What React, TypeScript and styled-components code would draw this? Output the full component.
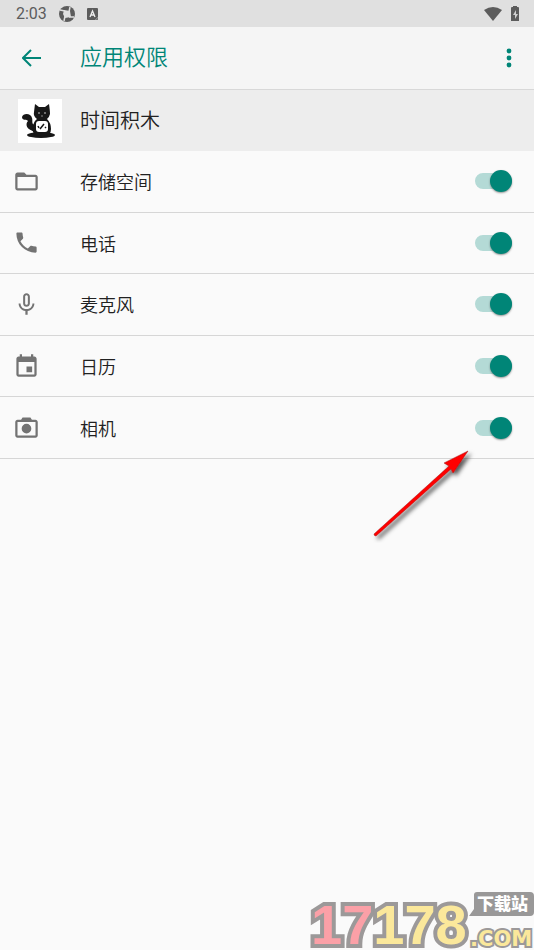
import React from "react";
import styled, { createGlobalStyle } from "styled-components";

const GlobalStyle = createGlobalStyle`
  * { box-sizing: border-box; }
  body {
    margin: 0;
    background: #fafafa;
    color: #212121;
    font-family: "Noto Sans CJK SC", sans-serif;
    font-weight: 350;
  }
`;

const Screen = styled.div`
  position: relative;
  min-height: 100vh;
  overflow: hidden;
`;

const StatusBar = styled.div`
  display: flex;
  align-items: center;
  justify-content: space-between;
  height: 27px;
  padding: 0 14px 0 16px;
  background: #e0e0e0;
  color: #5c5c5c;
  font-family: Roboto, sans-serif;
  font-size: 16px;
  font-weight: 400;
`;

const StatusGroup = styled.div<{ $gap: number }>`
  display: flex;
  align-items: center;
  gap: ${(p) => p.$gap}px;

  svg { display: block; }
`;

const Toolbar = styled.header`
  display: flex;
  align-items: center;
  height: 63px;
  padding: 0 12px 0 16px;
  background: #f5f5f5;
  border-bottom: 1px solid #d8d8d8;
  color: #008577;
`;

const IconButton = styled.button<{ $width: number }>`
  display: flex;
  align-items: center;
  justify-content: center;
  width: ${(p) => p.$width}px;
  height: 40px;
  padding: 0;
  border: 0;
  background: none;
  color: inherit;
  cursor: pointer;
`;

const Title = styled.h1`
  flex: 1;
  margin: 0 0 0 32px;
  font-family: Roboto, "Noto Sans CJK SC", sans-serif;
  font-size: 22px;
  line-height: 32px;
  font-weight: inherit;
`;

const AppHeader = styled.section`
  display: flex;
  align-items: center;
  gap: 18px;
  height: 61px;
  padding: 0 18px;
  background: #ededed;
`;

const AppIcon = styled.div`
  width: 44px;
  height: 44px;
  background: #fff;

  svg { display: block; }
`;

const AppName = styled.h2`
  margin: 0;
  font-family: Roboto, "Noto Sans CJK SC", sans-serif;
  font-size: 20px;
  line-height: 28px;
  font-weight: inherit;
`;

const PermissionList = styled.ul`
  display: grid;
  grid-auto-rows: 1fr;
  min-height: 308px;
  margin: 0;
  padding: 0;
  list-style: none;
`;

const PermissionItem = styled.li`
  display: flex;
  border-bottom: 1px solid #d6d6d6;
`;

const PermissionLabel = styled.label`
  display: flex;
  flex: 1;
  align-items: center;
  padding: 0 22px 0 13px;
  cursor: pointer;

  svg { display: block; }
`;

const PermissionName = styled.span`
  flex: 1;
  margin-left: 40px;
  font-size: 18px;
  line-height: 24px;
`;

const Switch = styled.input`
  appearance: none;
  display: flex;
  align-items: center;
  width: 37px;
  height: 16px;
  margin: 0;
  border-radius: 8px;
  background: #c8c8c8;
  cursor: pointer;

  &::before {
    content: "";
    width: 22px;
    height: 22px;
    flex: none;
    border-radius: 50%;
    background: #f1f1f1;
    box-shadow: 0 1px 2px rgba(0, 0, 0, 0.4);
  }

  &:checked {
    justify-content: flex-end;
    background: #b4dad6;
  }

  &:checked::before { background: #008577; }
`;

const Pointer = styled.svg`
  position: absolute;
  top: 445px;
  right: 56px;
  pointer-events: none;
`;

const Watermark = styled.div`
  position: absolute;
  right: 0;
  bottom: 0;
  pointer-events: none;

  svg { display: block; }
`;

const icons = {
  folder: "M10 4H4c-1.100 0-2 .9-2 2v12c0 1.100.9 2 2 2h16c1.100 0 2-.9 2-2V8c0-1.100-.9-2-2-2h-8zM4 8H20V18H4z",
  phone: "M6.62 10.79c1.44 2.83 3.76 5.14 6.59 6.59l2.2-2.2c.27-.27.67-.36 1.02-.24 1.12.37 2.33.57 3.57.57.55 0 1 .45 1 1V20c0 .55-.45 1-1 1-9.39 0-17-7.61-17-17 0-.55.45-1 1-1h3.5c.55 0 1 .45 1 1 0 1.25.2 2.45.57 3.57.11.35.03.74-.25 1.02l-2.2 2.2z",
  mic: "M12 14c1.66 0 3-1.34 3-3V5c0-1.66-1.34-3-3-3S9 3.34 9 5v6c0 1.66 1.34 3 3 3zm-1.2-9.1c0-.66.54-1.2 1.2-1.2s1.2.54 1.2 1.2v6.2c0 .66-.53 1.2-1.2 1.2s-1.2-.54-1.2-1.2V4.9zm6.5 6.1c0 3-2.54 5.1-5.3 5.1S6.7 14 6.7 11H5c0 3.41 2.72 6.23 6 6.72V21h2v-3.28c3.28-.48 6-3.3 6-6.72h-1.7z",
  calendar: "M17 12h-5v5h5v-5zM16 1v2H8V1H6v2H5c-1.11 0-1.99.9-1.99 2L3 19c0 1.1.89 2 2 2h14c1.1 0 2-.9 2-2V5c0-1.1-.9-2-2-2h-1V1h-2zm3 18H5V8h14v11z",
  camera: "M20 5h-3.200L15.500 3h-7L7.200 5H4c-1.100 0-2 .9-2 2v12c0 1.100.9 2 2 2h16c1.100 0 2-.9 2-2V7c0-1.100-.9-2-2-2zm0 14H4V7h16v12zM12 8.700a4.300 4.300 0 1 0 0 8.600 4.300 4.300 0 0 0 0-8.600z",
};

const permissions: { name: string; icon: keyof typeof icons }[] = [
  { name: "存储空间", icon: "folder" },
  { name: "电话", icon: "phone" },
  { name: "麦克风", icon: "mic" },
  { name: "日历", icon: "calendar" },
  { name: "相机", icon: "camera" },
];

const CatLogo = () => (
  <svg width="44" height="44" viewBox="0 0 44 44" aria-hidden="true">
    <ellipse cx="23" cy="36" rx="14" ry="3" fill="#171717" />
    <path d="M18 33C8 31 7 25 10 22C9 20 4 22 4 18C5 14 13 14 14 19C15 22 13 25 17 26Z" fill="#171717" />
    <path d="M17 5L21 8H27L31 5Q32 12 32 15Q31 19 29 20Q33 24 33 30Q33 36 27 37H19Q13 34 15 27Q16 22 19 20Q15 17 16 13Z" fill="#171717" />
    <rect x="18" y="22" width="12" height="11" rx="3" fill="#fff" />
    <path d="M22 30L26 25M20 27L21 29M27 28L28 29" stroke="#171717" strokeWidth="1.500" />
    <circle cx="21" cy="14" r="0.800" fill="#ddd" />
    <circle cx="27" cy="14" r="0.800" fill="#ddd" />
    <path d="M23 17H25" stroke="#888" />
  </svg>
);

const BrandMark = () => (
  <svg width="226" height="62" viewBox="0 0 226 62" overflow="visible" role="img" aria-label="17178.com 下载站">
    <g strokeLinejoin="miter" stroke="#9c9999" paintOrder="stroke">
      <text x="3" y="56" fontFamily='"Liberation Sans", sans-serif' fontSize="56" fontWeight="700" strokeWidth="8">
        <tspan fill="#fba0a7">17</tspan>
        <tspan fill="#fbe89b">178</tspan>
      </text>
      <text x="162" y="58" fill="#fbe89b" fontFamily='"DejaVu Sans", sans-serif' fontSize="21" fontWeight="700" strokeWidth="4">.COM</text>
    </g>
    <path d="M169 4H222Q226 4 226 8V24Q226 28 222 28H161L166 21V7Q166 4 169 4Z" fill="#999898" />
    <text x="169" y="22" fill="#fff" fontFamily='"Noto Sans CJK SC", sans-serif' fontSize="17" fontWeight="900">下载站</text>
  </svg>
);

export default function App() {
  return (
    <>
      <GlobalStyle />
      <Screen>
        <StatusBar>
          <StatusGroup $gap={12}>
            <span>2:03</span>
            <svg width="16" height="16" viewBox="0 0 16 16" aria-hidden="true">
              <circle cx="8" cy="8" r="8" fill="#5c5c5c" />
              <path d="M5 4L11 5L12 11L6 12L4 8Z" fill="#e0e0e0" />
              <path d="M1 4L6 5M11 1L10 6M15 11L10 11M5 15L6 10" stroke="#e0e0e0" strokeWidth="1.500" />
            </svg>
            <svg width="11" height="12" viewBox="0 0 11 12" aria-hidden="true">
              <path d="M1 0H10Q11 0 11 1V9L8 12H1Q0 12 0 11V1Q0 0 1 0Z" fill="#5c5c5c" />
              <path d="M3 9L5.500 3L8 9M4 7H7" fill="none" stroke="#eee" strokeWidth="1.300" />
              <path d="M11 9V12H8Z" fill="#777" />
            </svg>
          </StatusGroup>
          <StatusGroup $gap={8}>
            <svg width="18" height="14" viewBox="0 0 18 14" aria-hidden="true">
              <path d="M0 3Q9 -3 18 3L9 14Z" fill="#5c5c5c" />
            </svg>
            <svg width="10" height="16" viewBox="0 0 10 16" aria-hidden="true">
              <path d="M3 0H7V1H8Q9 1 9 2V15H1V2Q1 1 2 1H3Z" fill="#5c5c5c" />
              <path d="M6 4L3 9H5V13L8 8H6Z" fill="#d0d0d0" />
            </svg>
          </StatusGroup>
        </StatusBar>
        <Toolbar>
          <IconButton $width={32} type="button" aria-label="返回">
            <svg width="20" height="18" viewBox="0 0 20 18" fill="none" stroke="currentColor" strokeWidth="2">
              <path d="M9 1L1 9L9 17M1 9H19" />
            </svg>
          </IconButton>
          <Title>应用权限</Title>
          <IconButton $width={26} type="button" aria-label="更多选项">
            <svg width="6" height="20" viewBox="0 0 6 20" fill="currentColor">
              <circle cx="3" cy="3" r="2.400" />
              <circle cx="3" cy="10" r="2.400" />
              <circle cx="3" cy="17" r="2.400" />
            </svg>
          </IconButton>
        </Toolbar>
        <main>
          <AppHeader>
            <AppIcon><CatLogo /></AppIcon>
            <AppName>时间积木</AppName>
          </AppHeader>
          <PermissionList>
            {permissions.map(({ name, icon }) => (
              <PermissionItem key={name}>
                <PermissionLabel>
                  <svg width="27" height="27" viewBox="0 0 24 24" fill="#737373" aria-hidden="true">
                    <path d={icons[icon]} fillRule={icon === "camera" || icon === "folder" ? "evenodd" : "nonzero"} />
                  </svg>
                  <PermissionName>{name}</PermissionName>
                  <Switch type="checkbox" role="switch" defaultChecked />
                </PermissionLabel>
              </PermissionItem>
            ))}
          </PermissionList>
        </main>
        <Pointer width="108" height="98" viewBox="0 0 108 98" aria-hidden="true">
          <defs>
            <filter id="pointer-shadow" x="-10%" y="-10%" width="130%" height="130%">
              <feDropShadow dx="3" dy="3" stdDeviation="2" floodColor="#000" floodOpacity="0.65" />
            </filter>
          </defs>
          <g filter="url(#pointer-shadow)" fill="#f00" stroke="#a01414" strokeWidth="0.500">
            <path d="M98 6L74 18L79 21L4 89Q4 91 6 91L81 24L83 28Z" />
          </g>
        </Pointer>
        <Watermark><BrandMark /></Watermark>
      </Screen>
    </>
  );
}
